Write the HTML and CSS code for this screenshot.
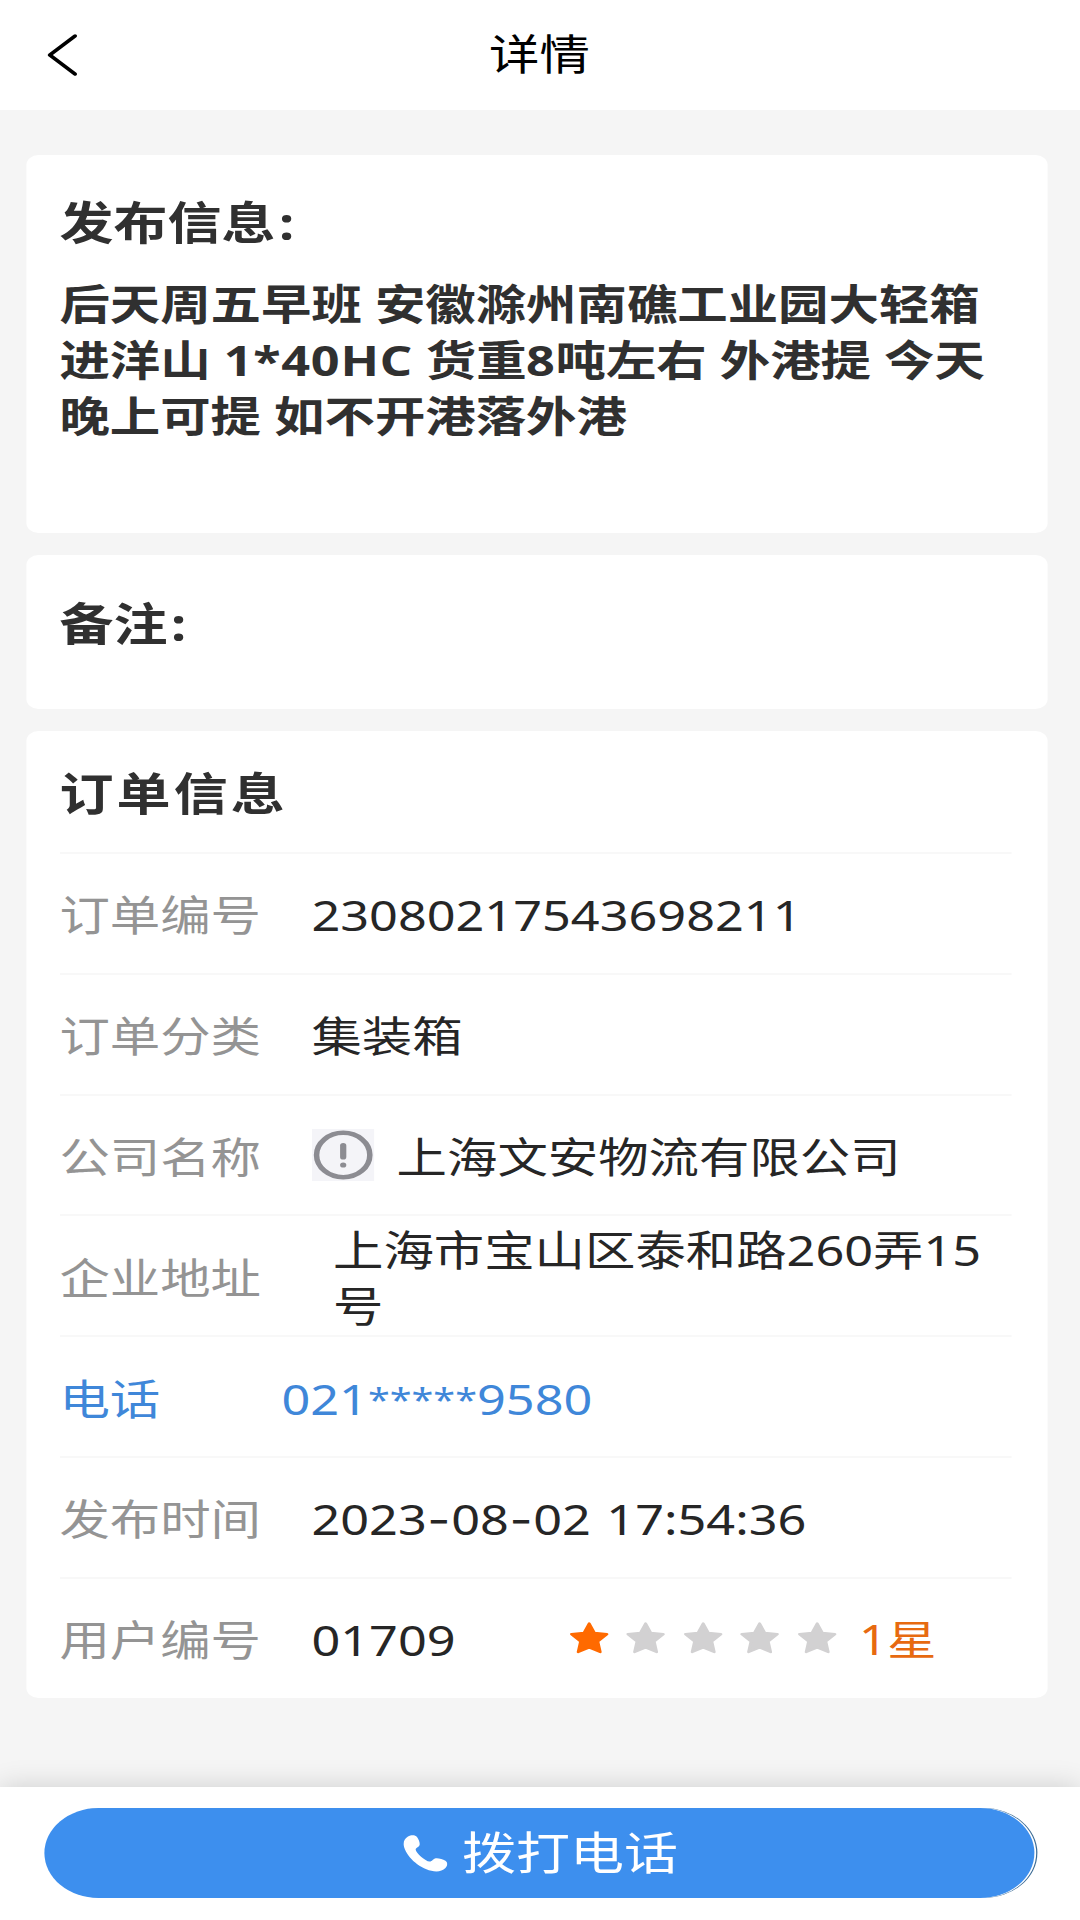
FILE: index.html
```html
<!DOCTYPE html>
<html lang="zh-CN">
<head>
<meta charset="utf-8">
<title>详情</title>
<link rel="stylesheet" href="styles.css">
</head>
<body>
<div class="screen">
  <header class="topbar">
    <svg class="back" viewBox="0 0 28 46" aria-hidden="true"><path d="M23.500 4L2.500 23L23.500 42"/></svg>
    <h1 class="topbar-title">详情</h1>
  </header>

  <main class="content">
    <section class="card card-post">
      <h2 class="card-title">发布信息<span class="colon">:</span></h2>
      <p class="post-text">后天周五早班 安徽滁州南礁工业园大轻箱<br>进洋山 <span class="code">1*40HC</span> 货重<span class="digit">8</span>吨左右 外港提 今天<br>晚上可提 如不开港落外港</p>
    </section>

    <section class="card card-note">
      <h2 class="card-title">备注<span class="colon">:</span></h2>
    </section>

    <section class="card card-order">
      <h2 class="card-title order-title">订单信息</h2>
      <div class="row"><span class="label">订单编号</span><span class="value">23080217543698211</span></div>
      <div class="row"><span class="label">订单分类</span><span class="value">集装箱</span></div>
      <div class="row">
        <span class="label">公司名称</span>
        <svg class="notice" viewBox="0 0 52 52" aria-hidden="true">
          <rect width="52" height="52" fill="#f4f4f8"/>
          <circle cx="26" cy="26" r="22.200" fill="none" stroke="#8c8c92" stroke-width="4.600"/>
          <path d="M26 16.500V28" stroke="#8c8c92" stroke-width="5.200" stroke-linecap="round"/>
          <circle cx="26" cy="36" r="2.600" fill="#8c8c92"/>
        </svg>
        <span class="value">上海文安物流有限公司</span>
      </div>
      <div class="row"><span class="label">企业地址</span><span class="value address">上海市宝山区泰和路260弄15号</span></div>
      <div class="row row-phone"><span class="label">电话</span><span class="value">021<span class="mask">*****</span>9580</span></div>
      <div class="row"><span class="label">发布时间</span><span class="value">2023<span class="dash">-</span>08<span class="dash">-</span>02 17:54:36</span></div>
      <div class="row">
        <span class="label">用户编号</span><span class="value user-no">01709</span>
        <div class="stars">
          <svg class="star star-on" viewBox="0 0 34 34"><path d="M17 2.500L21.400 12L31.800 13.200L24.200 20.400L26.200 31L17 26.400L7.800 31L9.800 20.400L2.200 13.200L12.600 12Z"/></svg>
          <svg class="star" viewBox="0 0 34 34"><path d="M17 2.500L21.400 12L31.800 13.200L24.200 20.400L26.200 31L17 26.400L7.800 31L9.800 20.400L2.200 13.200L12.600 12Z"/></svg>
          <svg class="star" viewBox="0 0 34 34"><path d="M17 2.500L21.400 12L31.800 13.200L24.200 20.400L26.200 31L17 26.400L7.800 31L9.800 20.400L2.200 13.200L12.600 12Z"/></svg>
          <svg class="star" viewBox="0 0 34 34"><path d="M17 2.500L21.400 12L31.800 13.200L24.200 20.400L26.200 31L17 26.400L7.800 31L9.800 20.400L2.200 13.200L12.600 12Z"/></svg>
          <svg class="star" viewBox="0 0 34 34"><path d="M17 2.500L21.400 12L31.800 13.200L24.200 20.400L26.200 31L17 26.400L7.800 31L9.800 20.400L2.200 13.200L12.600 12Z"/></svg>
        </div>
        <span class="rating">1星</span>
      </div>
    </section>
  </main>

  <footer class="bottombar">
    <button class="call" type="button">
      <svg class="phone" viewBox="0 0 37 37" aria-hidden="true"><path d="M4 1.600C6.500-.2 10-.3 11.500 2C13 4.400 14 7.500 13.700 9.800C13.400 12 10.600 12.500 10.400 14.600C10.300 17.500 18.500 26.300 22 26.600C24.200 26.700 24.800 23.800 27.200 23.300C29.500 23 33 24.200 35.200 25.800C37.400 27.500 37 30.800 35.200 33C32.500 36.500 28 37 23.500 35.800C12.500 32.800 2 20.800.4 10.200C0 6.800 1.200 3.600 4 1.600Z"/></svg>
      <span>拨打电话</span>
    </button>
  </footer>
</div>
</body>
</html>
```
FILE: styles.css
```css
* { box-sizing: border-box; }

body {
  margin: 0;
  overflow: hidden;
  background: #f5f5f5;
  font-family: "Noto Sans", "Noto Sans CJK SC", sans-serif;
}

/* 900px-wide layout stretched to the 1080px viewport */
.screen {
  display: flex;
  flex-direction: column;
  width: 900px;
  height: 1920px;
  transform: scaleX(1.2);
  transform-origin: 0 0;
  color: #262626;
  font-size: 42px;
  line-height: 56px;
}

.topbar {
  display: grid;
  grid-template-columns: 120px 1fr 120px;
  align-items: center;
  height: 110px;
  background: #fff;
}

.back {
  width: 28px;
  height: 46px;
  margin-left: 38.5px;
  fill: none;
  stroke: #000;
  stroke-width: 3.4;
  stroke-linecap: round;
  stroke-linejoin: round;
}

.topbar-title {
  margin: 0;
  padding: 0 1px 3px 0;
  color: #000;
  font-size: 42px;
  font-weight: 400;
  text-align: center;
}

.content {
  display: flex;
  flex: 1;
  flex-direction: column;
  gap: 22px;
  padding: 45px 27.5px 0 21.5px;
}

.card {
  padding: 0 30px 0 28px;
  border-radius: 10px;
  background: #fff;
}

.card-post { height: 378px; padding-top: 39px; }
.card-note { height: 154px; padding-top: 40px; }
.card-order { height: 967px; }

.card-title {
  margin: 0;
  color: #303030;
  font-size: 45px;
  font-weight: 700;
  line-height: 58px;
}

.colon {
  margin-left: 3px;
  line-height: 1;
}

.post-text {
  margin: 24px 0 0;
  color: #303030;
  font-weight: 700;
  white-space: nowrap;
}

.code { letter-spacing: .6px; }
.digit { margin: 0 .5px 0 -.5px; }

.order-title {
  height: 121px;
  padding-top: 34px;
  letter-spacing: 2.6px;
}

.row {
  display: flex;
  align-items: center;
  height: 120.8px;
  border-top: 2px solid #f8f8f8;
}

.label {
  flex: none;
  width: 210px;
  padding-top: 4px;
  color: #949494;
}

.value {
  padding-top: 4px;
  white-space: nowrap;
  word-spacing: 2px;
}

.address {
  width: 565px;
  margin-left: 18px;
  padding-top: 5px;
  white-space: normal;
}

.notice {
  width: 52px;
  height: 52px;
  margin: 0 19px 0 0;
}

.row-phone .label { width: 185px; }
.row-phone .label,
.row-phone .value { color: #3f87d9; }

.mask {
  font-size: 33px;
  line-height: 1;
  vertical-align: 3px;
}

.dash {
  margin: 0 .5px;
  font-family: Inter, sans-serif;
}

.user-no { width: 214px; }

.stars {
  display: flex;
  gap: 13.6px;
}

.star {
  width: 34px;
  height: 34px;
  fill: #d2d1d2;
  stroke: #d2d1d2;
  stroke-width: 2.4;
  stroke-linejoin: round;
}

.star-on {
  fill: #ff6a00;
  stroke: #ff6a00;
}

.rating {
  margin-left: 18px;
  padding-top: 2px;
  color: #e76a10;
  font-size: 41px;
}

.bottombar {
  height: 133px;
  padding: 21px 38px 0 37px;
  background: #fff;
  box-shadow: 0 0 24px rgba(0, 0, 0, .16);
}

.call {
  display: flex;
  align-items: center;
  justify-content: center;
  gap: 12px;
  width: 825px;
  height: 90px;
  padding: 0 0 0 2px;
  border: 0;
  border-radius: 45px;
  background: #3d8fee;
  box-shadow: 1.5px 0 0 #fff, 2.5px 0 0 #3a6a94;
  color: #fff;
  font-family: inherit;
  font-size: 45px;
  line-height: 58px;
}

.phone {
  width: 37px;
  height: 37px;
  fill: #fff;
}
```
